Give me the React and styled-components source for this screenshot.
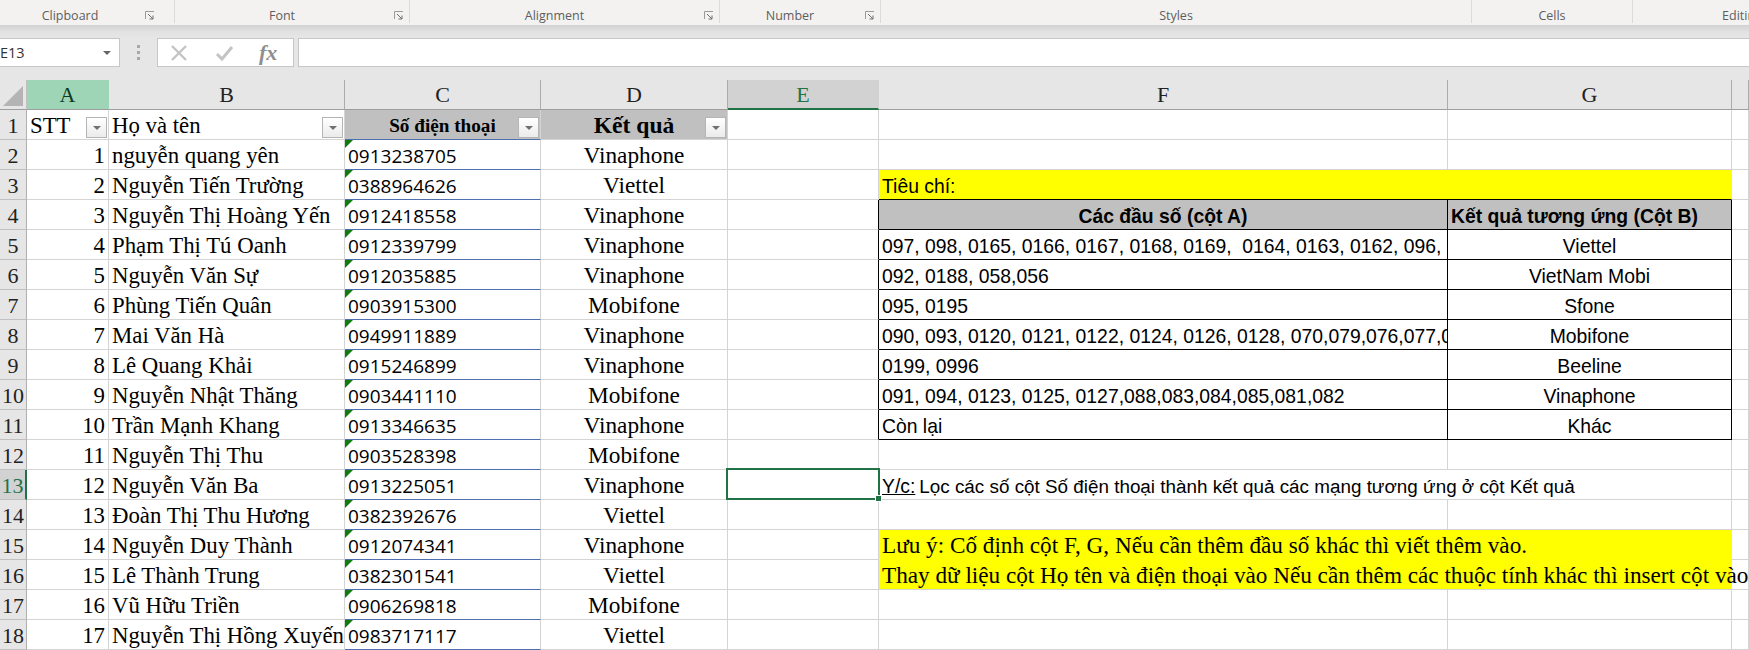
import React from "react";
import styled, { createGlobalStyle } from "styled-components";

const GRID = "27px 82px 236px 196px 187px 151px 569px 284px 1fr";
const SERIF = '"Liberation Serif", "Times New Roman", serif';
const SANS = '"Liberation Sans", Arial, sans-serif';
const UI = '"Open Sans", "Noto Sans", sans-serif';

const Global = createGlobalStyle`
  html, body { margin: 0; padding: 0; background: #fff; }
  #root { width: 1749px; height: 650px; overflow: hidden; }
`;

const Page = styled.div`
  width: 1749px;
  height: 650px;
  overflow: hidden;
  display: flex;
  flex-direction: column;
`;

/* ---- ribbon ---- */
const Ribbon = styled.div`
  height: 25px;
  flex: none;
  display: flex;
  background: #f3f2f1;
`;
const RibbonGroup = styled.div`
  width: ${(p) => p.$w}px;
  flex: none;
  height: 23px;
  display: flex;
  align-items: center;
  box-sizing: border-box;
  padding-right: ${(p) => p.$pad || 0}px;
  border-right: ${(p) => (p.$last ? "none" : "1px solid #dcdbda")};
`;
const RibbonLabel = styled.span`
  flex: 1;
  text-align: center;
  font: 12.5px ${UI};
  color: #5e5e5e;
  padding-top: 8px;
  line-height: 14px;
  white-space: nowrap;
`;
const Launcher = styled.svg`
  width: 10px;
  height: 10px;
  margin: 9px 5px 0 5px;
  flex: none;
`;

/* ---- formula bar ---- */
const FormulaBar = styled.div`
  height: 55px;
  flex: none;
  box-sizing: border-box;
  padding: 13px 0;
  display: flex;
  align-items: stretch;
  background: linear-gradient(#d2d2d2 0, #e2e2e2 7px, #e6e6e6 13px);
`;
const NameBox = styled.div`
  width: 120px;
  flex: none;
  box-sizing: border-box;
  background: #fff;
  border: 1px solid #c6c6c6;
  border-left: none;
  display: flex;
  align-items: center;
  justify-content: space-between;
  padding: 0 8px 0 0;
  font: 14.5px ${UI};
  color: #333;
`;
const Caret = styled.i`
  width: 0;
  height: 0;
  border-left: 4px solid transparent;
  border-right: 4px solid transparent;
  border-top: 4px solid #666;
`;
const Grip = styled.div`
  width: 37px;
  flex: none;
  display: flex;
  flex-direction: column;
  align-items: center;
  justify-content: center;
  gap: 3px;
`;
const GripDot = styled.i`
  width: 3px;
  height: 3px;
  background: #a8a8a8;
`;
const FxBox = styled.div`
  width: 137px;
  flex: none;
  box-sizing: border-box;
  background: #fff;
  border: 1px solid #c6c6c6;
  display: flex;
  align-items: center;
  padding-left: 11px;
  gap: 25px;
`;
const FxIcon = styled.svg`
  width: 20px;
  height: 20px;
  flex: none;
`;
const FxText = styled.span`
  font: italic bold 22px ${SERIF};
  color: #8f8f8f;
  margin-left: 0;
`;
const FormulaInput = styled.div`
  flex: 1;
  margin-left: 4px;
  background: #fff;
  border: 1px solid #c6c6c6;
  border-right: none;
`;

/* ---- sheet ---- */
const Row = styled.div`
  display: grid;
  grid-template-columns: ${GRID};
  height: 30px;
  flex: none;
`;
const Corner = styled.div`
  background: #e6e6e6;
  box-sizing: border-box;
  border-bottom: 1px solid #9e9e9e;
  border-right: 1px solid #c0c0c0;
  display: flex;
  align-items: flex-end;
  justify-content: flex-end;
  padding: 0 3px 3px 0;
`;
const CornerMark = styled.i`
  width: 0;
  height: 0;
  border-left: 20px solid transparent;
  border-bottom: 20px solid #b4b4b4;
`;
const ColHead = styled.div`
  box-sizing: border-box;
  display: flex;
  align-items: center;
  justify-content: center;
  font: 22px ${SERIF};
  padding-top: 1px;
  background: ${(p) => (p.$tone === "green" ? "#9fd5b7" : p.$tone === "active" ? "#d2d2d2" : "#e6e6e6")};
  color: ${(p) => (p.$tone === "active" ? "#217346" : p.$tone === "green" ? "#0b3b22" : "#222")};
  border-right: 1px solid ${(p) => (p.$tone ? "transparent" : "#ababab")};
  border-bottom: ${(p) => (p.$tone === "active" ? "2px solid #217346" : "1px solid #9e9e9e")};
`;
const RowHead = styled.div`
  box-sizing: border-box;
  display: flex;
  align-items: center;
  justify-content: center;
  padding-top: 2px;
  font: 22px ${SERIF};
  background: ${(p) => (p.$active ? "#d2d2d2" : "#e6e6e6")};
  color: ${(p) => (p.$active ? "#217346" : "#222")};
  border-bottom: 1px solid #c0c0c0;
  border-right: ${(p) => (p.$active ? "2px solid #217346" : "1px solid #b0b0b0")};
`;
const Cell = styled.div`
  position: relative;
  box-sizing: border-box;
  min-width: 0;
  display: flex;
  align-items: center;
  white-space: pre;
  color: #000;
  padding: ${(p) => p.$lift ?? 2}px 3px 0;
  border-right: 1px solid ${(p) => p.$right || "#d4d4d4"};
  border-bottom: 1px solid ${(p) => p.$bottom || "#d4d4d4"};
  background: ${(p) => p.$bg || "transparent"};
  justify-content: ${(p) => p.$align || "flex-start"};
  overflow: ${(p) => (p.$spill ? "visible" : "hidden")};
  font: ${(p) => p.$font || `22.8px ${SERIF}`};
  ${(p) => p.$span && `grid-column: span ${p.$span};`}
`;
const Filter = styled.span`
  position: absolute;
  right: 1px;
  top: 7px;
  width: 21px;
  height: 21px;
  box-sizing: border-box;
  border: 1px solid #b5b5b5;
  background: linear-gradient(#ffffff, #ebebeb);
  display: flex;
  align-items: center;
  justify-content: center;
  &::after {
    content: "";
    border-left: 4px solid transparent;
    border-right: 4px solid transparent;
    border-top: 4px solid #707070;
  }
`;
const Triangle = styled.i`
  position: absolute;
  left: 0;
  top: 0;
  width: 0;
  height: 0;
  border-top: 8px solid #107c10;
  border-right: 8px solid transparent;
`;
const Selection = styled.span`
  position: absolute;
  inset: -2px -2px -1px -2px;
  border: 2px solid #217346;
  z-index: 2;
  pointer-events: none;
  &::after {
    content: "";
    position: absolute;
    right: -4px;
    bottom: -4px;
    width: 5px;
    height: 5px;
    background: #217346;
    border: 1px solid #fff;
  }
`;
const SelectCell = styled(Cell)`
  overflow: visible;
`;
const Underlined = styled.span`
  text-decoration: underline;
  margin-right: 4px;
`;
const TightText = styled.span`
  font-size: 18.85px;
`;

const data = [
  ["nguyễn quang yên", "0913238705", "Vinaphone"],
  ["Nguyễn Tiến Trường", "0388964626", "Viettel"],
  ["Nguyễn Thị Hoàng Yến", "0912418558", "Vinaphone"],
  ["Phạm Thị Tú Oanh", "0912339799", "Vinaphone"],
  ["Nguyễn Văn Sự", "0912035885", "Vinaphone"],
  ["Phùng Tiến Quân", "0903915300", "Mobifone"],
  ["Mai Văn Hà", "0949911889", "Vinaphone"],
  ["Lê Quang Khải", "0915246899", "Vinaphone"],
  ["Nguyễn Nhật Thăng", "0903441110", "Mobifone"],
  ["Trần Mạnh Khang", "0913346635", "Vinaphone"],
  ["Nguyễn Thị Thu", "0903528398", "Mobifone"],
  ["Nguyễn Văn Ba", "0913225051", "Vinaphone"],
  ["Đoàn Thị Thu Hương", "0382392676", "Viettel"],
  ["Nguyễn Duy Thành", "0912074341", "Vinaphone"],
  ["Lê Thành Trung", "0382301541", "Viettel"],
  ["Vũ Hữu Triền", "0906269818", "Mobifone"],
  ["Nguyễn Thị Hồng Xuyến", "0983717117", "Viettel"],
];

const criteria = [
  ["097, 098, 0165, 0166, 0167, 0168, 0169,  0164, 0163, 0162, 096, 086, 032, 033", "Viettel"],
  ["092, 0188, 058,056", "VietNam Mobi"],
  ["095, 0195", "Sfone"],
  ["090, 093, 0120, 0121, 0122, 0124, 0126, 0128, 070,079,076,077,078,089", "Mobifone"],
  ["0199, 0996", "Beeline"],
  ["091, 094, 0123, 0125, 0127,088,083,084,085,081,082", "Vinaphone"],
  ["Còn lại", "Khác"],
];

const arial = `19.35px ${SANS}`;
const phoneFont = `19px ${UI}`;
const noteFont = `23.2px ${SERIF}`;
const netFont = `23.3px ${SERIF}`;

function LauncherIcon() {
  return (
    <Launcher viewBox="0 0 10 10">
      <path d="M0.5 8V0.5H9" fill="none" stroke="#9a9a9a" />
      <path d="M3 3L8 8M8 4.5V8H4.5" fill="none" stroke="#6f6f6f" />
    </Launcher>
  );
}

function rightSide(i) {
  // i is the 1-based spreadsheet row
  if (i === 3) {
    return (
      <Cell $span={2} $lift={4} $bg="#ffff00" $right="#ffff00" $bottom="#000" $font={arial}>
        Tiêu chí:
      </Cell>
    );
  }
  if (i === 4) {
    return (
      <>
        <Cell $lift={4} $bg="#c0c0c0" $right="#000" $bottom="#000" $align="center" $font={`bold ${arial}`}>
          Các đầu số (cột A)
        </Cell>
        <Cell $lift={4} $bg="#c0c0c0" $right="#000" $bottom="#000" $font={`bold ${arial}`}>
          Kết quả tương ứng (Cột B)
        </Cell>
      </>
    );
  }
  if (i >= 5 && i <= 11) {
    const [a, b] = criteria[i - 5];
    return (
      <>
        <Cell $lift={4} $right="#000" $bottom="#000" $font={arial}>{a}</Cell>
        <Cell $lift={4} $right="#000" $bottom="#000" $align="center" $font={arial}>{b}</Cell>
      </>
    );
  }
  if (i === 13) {
    return (
      <Cell $span={2} $lift={4} $font={arial}>
        <span>
          <Underlined>Y/c:</Underlined>
          <TightText>Lọc các số cột Số điện thoại thành kết quả các mạng tương ứng ở cột Kết quả</TightText>
        </span>
      </Cell>
    );
  }
  if (i === 15) {
    return (
      <Cell $span={2} $bg="#ffff00" $right="#ffff00" $bottom="#ffff00" $spill $font={noteFont}>
        Lưu ý: Cố định cột F, G, Nếu cần thêm đầu số khác thì viết thêm vào.
      </Cell>
    );
  }
  if (i === 16) {
    return (
      <Cell $span={2} $bg="#ffff00" $right="#ffff00" $spill $font={noteFont}>
        Thay dữ liệu cột Họ tên và điện thoại vào Nếu cần thêm các thuộc tính khác thì insert cột vào
      </Cell>
    );
  }
  return (
    <>
      <Cell />
      <Cell />
    </>
  );
}

export default function App() {
  return (
    <Page>
      <Global />
      <Ribbon>
        <RibbonGroup $w={175} $pad={14}><RibbonLabel>Clipboard</RibbonLabel><LauncherIcon /></RibbonGroup>
        <RibbonGroup $w={235}><RibbonLabel>Font</RibbonLabel><LauncherIcon /></RibbonGroup>
        <RibbonGroup $w={310}><RibbonLabel>Alignment</RibbonLabel><LauncherIcon /></RibbonGroup>
        <RibbonGroup $w={161}><RibbonLabel>Number</RibbonLabel><LauncherIcon /></RibbonGroup>
        <RibbonGroup $w={591}><RibbonLabel>Styles</RibbonLabel></RibbonGroup>
        <RibbonGroup $w={161}><RibbonLabel>Cells</RibbonLabel></RibbonGroup>
        <RibbonGroup $w={218} $last><RibbonLabel>Editing</RibbonLabel></RibbonGroup>
      </Ribbon>

      <FormulaBar>
        <NameBox>E13<Caret /></NameBox>
        <Grip><GripDot /><GripDot /><GripDot /></Grip>
        <FxBox>
          <FxIcon viewBox="0 0 20 20">
            <path d="M3 3L17 17M17 3L3 17" stroke="#c4c4c4" strokeWidth="2.4" fill="none" />
          </FxIcon>
          <FxIcon viewBox="0 0 20 20">
            <path d="M3 11L8 16L18 4" stroke="#c4c4c4" strokeWidth="3" fill="none" />
          </FxIcon>
          <FxText>fx</FxText>
        </FxBox>
        <FormulaInput />
      </FormulaBar>

      <Row>
        <Corner><CornerMark /></Corner>
        <ColHead $tone="green">A</ColHead>
        <ColHead>B</ColHead>
        <ColHead>C</ColHead>
        <ColHead>D</ColHead>
        <ColHead $tone="active">E</ColHead>
        <ColHead>F</ColHead>
        <ColHead>G</ColHead>
        <ColHead />
      </Row>

      <Row>
        <RowHead>1</RowHead>
        <Cell>STT<Filter /></Cell>
        <Cell>Họ và tên<Filter /></Cell>
        <Cell $bg="#c0c0c0" $align="center" $bottom="#4f6fae" $font={`bold 19.2px ${SERIF}`}>
          Số điện thoại<Filter />
        </Cell>
        <Cell $bg="#c0c0c0" $align="center" $font={`bold 23.6px ${SERIF}`}>
          Kết quả<Filter />
        </Cell>
        <Cell />
        <Cell />
        <Cell />
        <Cell />
      </Row>

      {data.map(([name, phone, net], idx) => {
        const n = idx + 2;
        const inTable = n >= 4 && n <= 11;
        return (
          <Row key={n}>
            <RowHead $active={n === 13}>{n}</RowHead>
            <Cell $align="flex-end">{idx + 1}</Cell>
            <Cell>{name}</Cell>
            <Cell $bottom="#4f6fae" $lift={2} $font={phoneFont}><Triangle />{phone}</Cell>
            <Cell $align="center" $font={netFont}>{net}</Cell>
            {n === 13 ? (
              <SelectCell><Selection /></SelectCell>
            ) : (
              <Cell $right={inTable ? "#000" : undefined} />
            )}
            {rightSide(n)}
            <Cell />
          </Row>
        );
      })}
    </Page>
  );
}
